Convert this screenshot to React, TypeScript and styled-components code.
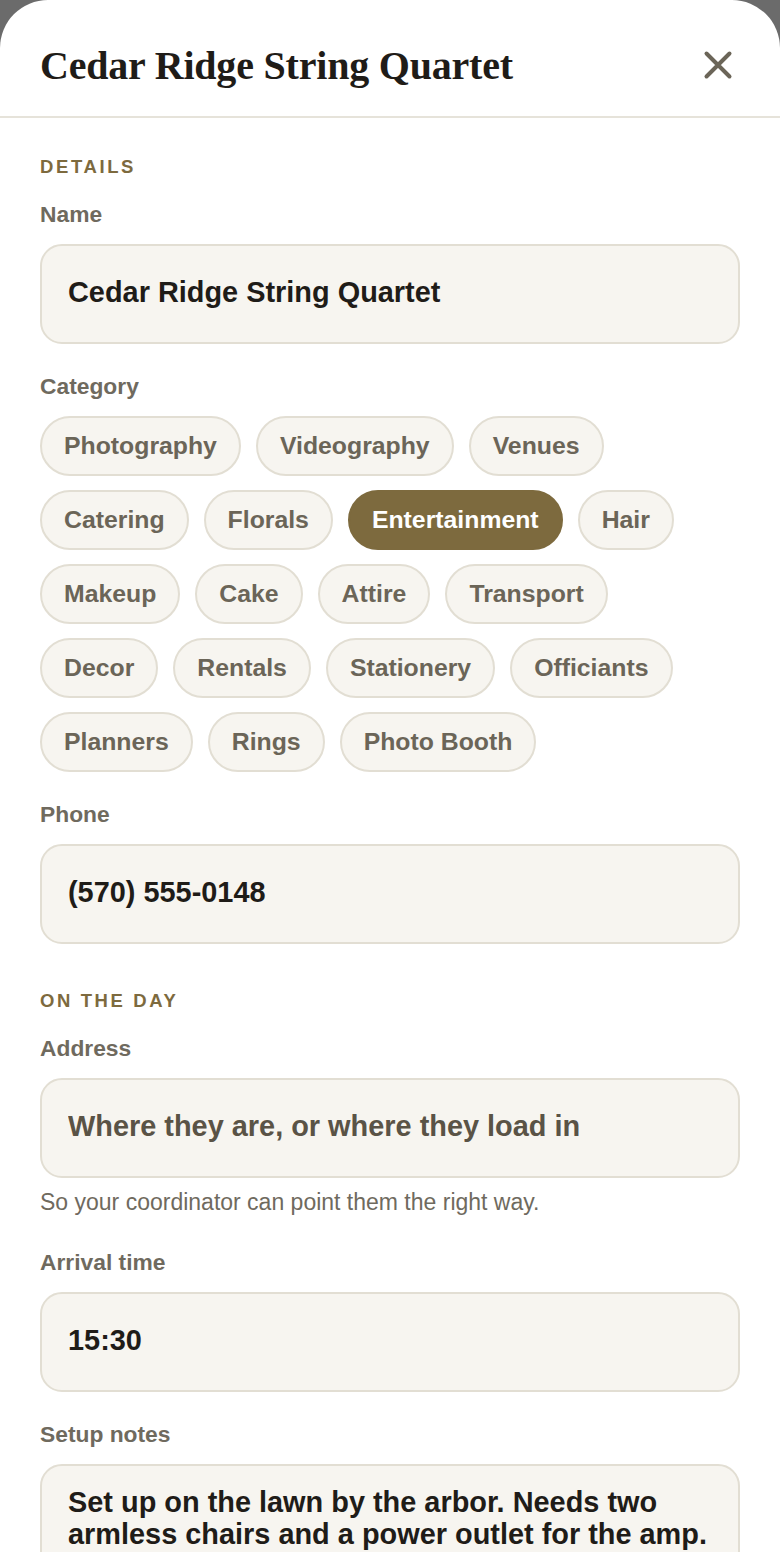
import React from "react";
import styled, { createGlobalStyle } from "styled-components";

const GlobalStyle = createGlobalStyle`
  html, body {
    margin: 0;
    padding: 0;
    background: #6b6b6b;
    overflow: hidden;
  }
  body {
    font-family: "Liberation Sans", Arial, sans-serif;
  }
  * { box-sizing: border-box; }
`;

const Sheet = styled.div`
  background: #ffffff;
  border-radius: 48px 48px 0 0;
  min-height: 1700px;
`;

const Header = styled.header`
  height: 118px;
  display: flex;
  align-items: center;
  justify-content: space-between;
  padding: 14px 40px 0 40px;
  border-bottom: 2px solid #e6e3da;
`;

const Title = styled.h1`
  margin: 0;
  font-family: "Liberation Serif", "Times New Roman", serif;
  font-weight: 700;
  font-size: 40px;
  letter-spacing: -0.2px;
  color: #1f1c18;
`;

const CloseButton = styled.button`
  width: 44px;
  height: 44px;
  margin-right: 0;
  border: none;
  background: transparent;
  padding: 0;
  display: flex;
  align-items: center;
  justify-content: center;
  color: #6b6558;
  cursor: pointer;
`;

const Body = styled.div`
  padding: 38px 40px 0 40px;
  display: flex;
  flex-direction: column;
`;

const SectionTitle = styled.h2<{ $top?: number }>`
  margin: ${(p) => p.$top ?? 0}px 0 0 0;
  font-size: 18.5px;
  line-height: 22px;
  font-weight: 700;
  letter-spacing: 2.6px;
  text-transform: uppercase;
  color: #7d6a3e;
`;

const Field = styled.div<{ $top: number }>`
  margin-top: ${(p) => p.$top}px;
  display: flex;
  flex-direction: column;
`;

const Label = styled.label`
  font-size: 22.8px;
  line-height: 28px;
  font-weight: 700;
  color: #6f6a5e;
  margin-bottom: 16px;
`;

const TextInput = styled.input`
  width: 100%;
  height: 100px;
  border: 2px solid #e2ded3;
  border-radius: 22px;
  background: #f7f5f0;
  padding: 0 26px 3px 26px;
  font-family: "Liberation Sans", Arial, sans-serif;
  font-size: 28.9px;
  font-weight: 700;
  color: #1f1c18;
  outline: none;
  &::placeholder {
    color: #5a5346;
    opacity: 1;
  }
`;

const TextArea = styled.textarea`
  width: 100%;
  height: 160px;
  border: 2px solid #e2ded3;
  border-radius: 22px;
  background: #f7f5f0;
  padding: 21px 16px 0 26px;
  font-family: "Liberation Sans", Arial, sans-serif;
  font-size: 28.9px;
  line-height: 31.5px;
  font-weight: 700;
  color: #1f1c18;
  outline: none;
  resize: none;
  overflow: hidden;
`;

const Helper = styled.p`
  margin: 10px 0 0 0;
  font-size: 23px;
  line-height: 28px;
  color: #6f6a5e;
`;

const Chips = styled.div`
  display: flex;
  flex-wrap: wrap;
  gap: 14px 15px;
`;

const Chip = styled.button<{ $active?: boolean }>`
  height: 60px;
  padding: 0 22px;
  border-radius: 30px;
  border: 2px solid ${(p) => (p.$active ? "#7d6a3e" : "#e2ded3")};
  background: ${(p) => (p.$active ? "#7d6a3e" : "#f7f5f0")};
  color: ${(p) => (p.$active ? "#ffffff" : "#6b6558")};
  font-family: "Liberation Sans", Arial, sans-serif;
  font-size: 24.8px;
  font-weight: 700;
  cursor: pointer;
  white-space: nowrap;
`;

const categories = [
  "Photography",
  "Videography",
  "Venues",
  "Catering",
  "Florals",
  "Entertainment",
  "Hair",
  "Makeup",
  "Cake",
  "Attire",
  "Transport",
  "Decor",
  "Rentals",
  "Stationery",
  "Officiants",
  "Planners",
  "Rings",
  "Photo Booth",
];

export default function App() {
  const selected = "Entertainment";
  return (
    <>
      <GlobalStyle />
      <Sheet>
        <Header>
          <Title>Cedar Ridge String Quartet</Title>
          <CloseButton aria-label="Close">
            <svg width="30" height="30" viewBox="0 0 30 30" fill="none">
              <path
                d="M3.5 3.5 L26.5 26.5 M26.5 3.5 L3.5 26.5"
                stroke="currentColor"
                strokeWidth="4"
                strokeLinecap="round"
              />
            </svg>
          </CloseButton>
        </Header>
        <Body>
          <SectionTitle>Details</SectionTitle>
          <Field $top={22}>
            <Label>Name</Label>
            <TextInput readOnly value="Cedar Ridge String Quartet" />
          </Field>
          <Field $top={28}>
            <Label>Category</Label>
            <Chips>
              {categories.map((c) => (
                <Chip key={c} $active={c === selected}>
                  {c}
                </Chip>
              ))}
            </Chips>
          </Field>
          <Field $top={28}>
            <Label>Phone</Label>
            <TextInput readOnly value="(570) 555-0148" />
          </Field>
          <SectionTitle $top={46}>On the day</SectionTitle>
          <Field $top={22}>
            <Label>Address</Label>
            <TextInput readOnly placeholder="Where they are, or where they load in" />
            <Helper>So your coordinator can point them the right way.</Helper>
          </Field>
          <Field $top={32}>
            <Label>Arrival time</Label>
            <TextInput readOnly value="15:30" />
          </Field>
          <Field $top={28}>
            <Label>Setup notes</Label>
            <TextArea
              readOnly
              value="Set up on the lawn by the arbor. Needs two armless chairs and a power outlet for the amp."
            />
          </Field>
        </Body>
      </Sheet>
    </>
  );
}
